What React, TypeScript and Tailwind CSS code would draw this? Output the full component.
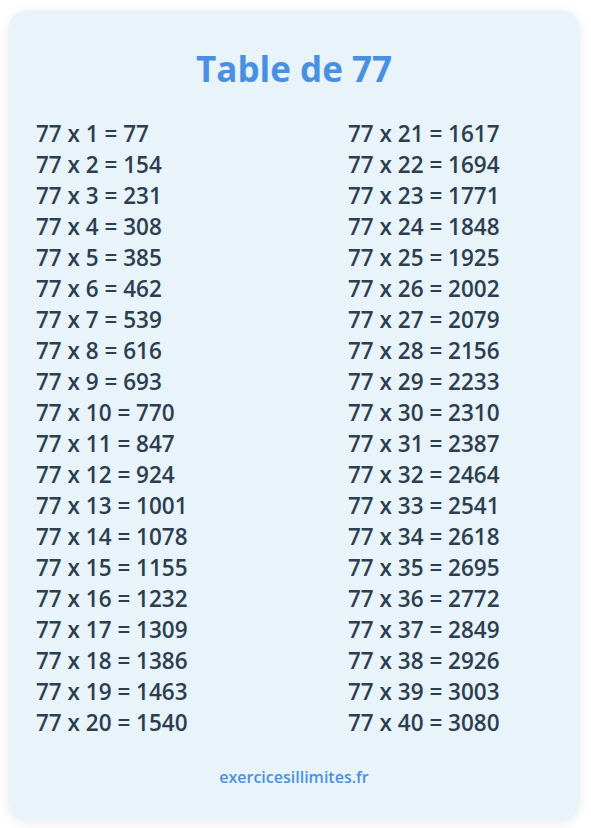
const ROWS = Array.from({ length: 20 }, (_, i) => i + 1);

function Line({ n }: { n: number }) {
  return (
    <div className="h-[31px] leading-[31px]">
      77 x {n} = {77 * n}
    </div>
  );
}

export default function App() {
  return (
    <div className="min-h-[828px] bg-white pt-[10px] px-2 font-['Open_Sans',sans-serif]">
      <div className="w-[572px] h-[811px] rounded-[20px] bg-[#e8f4fa] shadow-[0_2px_12px_rgba(0,0,0,0.08)] px-[28px] pt-[38px]">
        <h1 className="text-center text-[35px] leading-[41px] font-bold text-[#4a90e2]">
          Table de 77
        </h1>
        <div className="mt-[29px] grid grid-cols-[312px_1fr] text-[22.5px] font-semibold text-[#2c3e50]">
          <div>
            {ROWS.map((n) => (
              <Line key={n} n={n} />
            ))}
          </div>
          <div>
            {ROWS.map((n) => (
              <Line key={n} n={n + 20} />
            ))}
          </div>
        </div>
        <p className="mt-[29px] text-center text-[16px] leading-[20px] font-semibold text-[#4a90e2]">
          exercicesillimites.fr
        </p>
      </div>
    </div>
  );
}
